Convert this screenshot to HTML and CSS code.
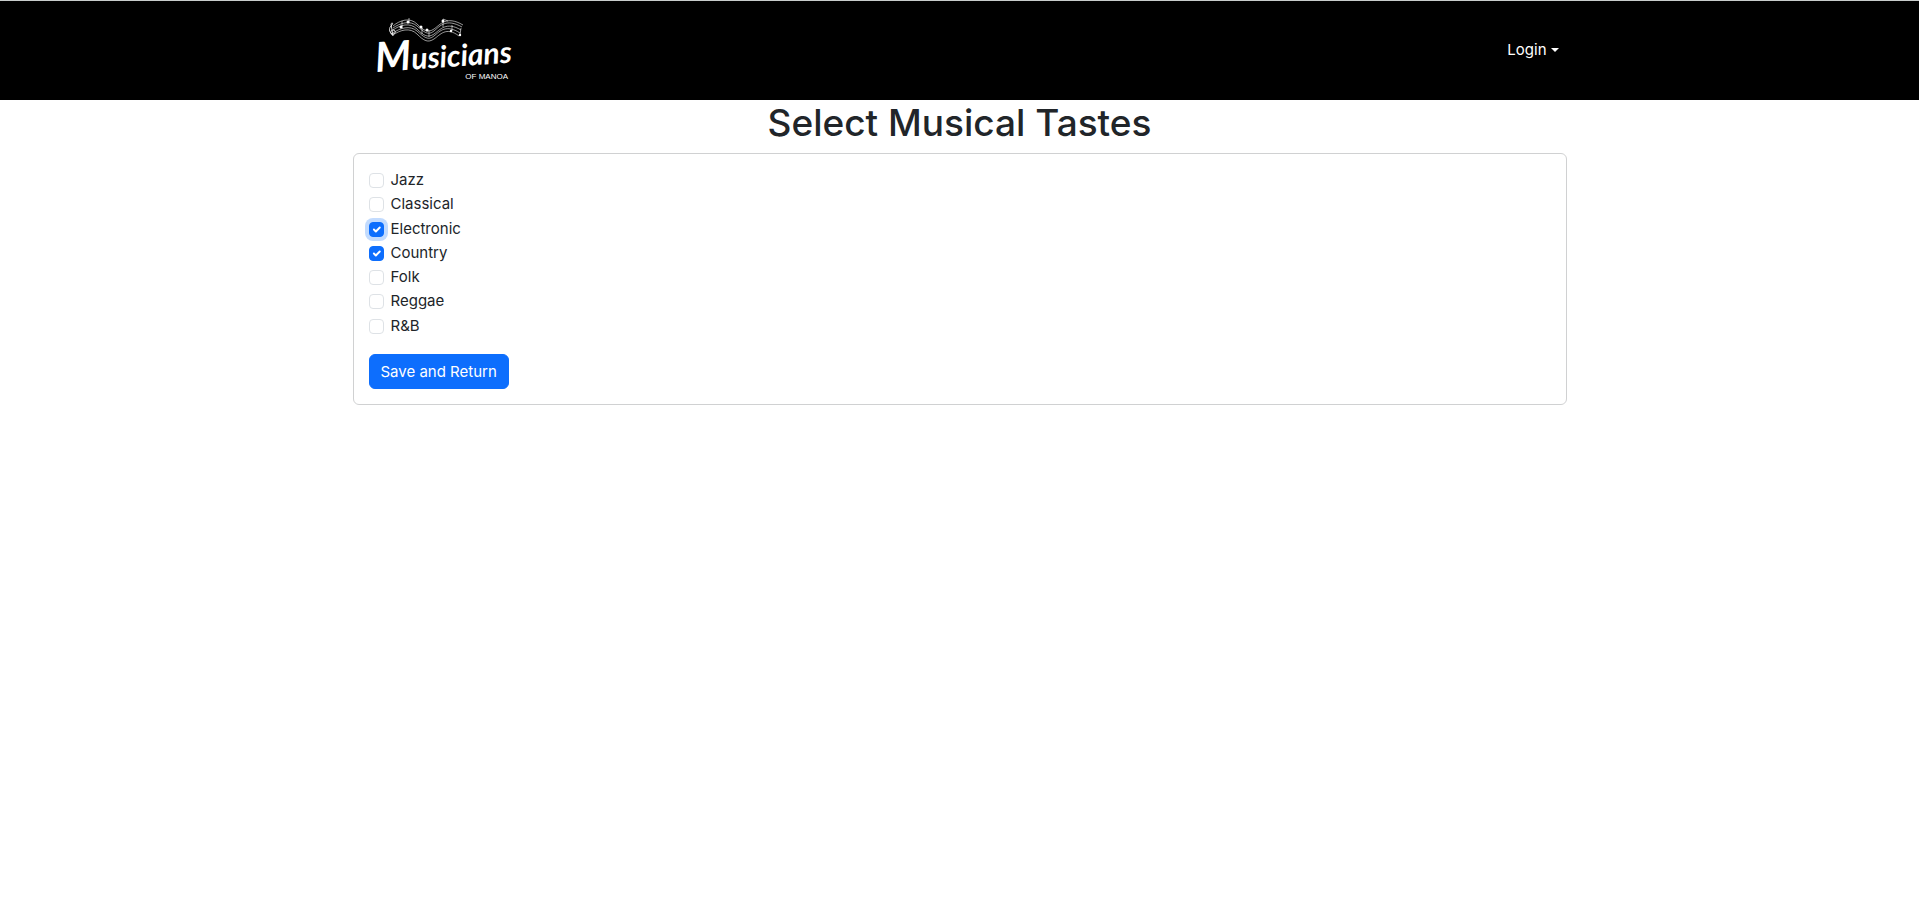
FILE: index.html
```html
<!DOCTYPE html>
<html lang="en">
<head>
<meta charset="utf-8">
<meta name="viewport" content="width=device-width, initial-scale=1">
<title>Musicians of Manoa</title>
<link rel="stylesheet" href="styles.css">
</head>
<body>
<header class="navbar">
  <div class="container navbar-inner">
    <a class="brand" href="#" aria-label="Musicians of Manoa">
      <svg class="logo" viewBox="0 0 150 75" width="150" height="75">
        <g class="staff">
          <path d="M25 14C32 8 42 5 49 12S60 21 66 17 78 3 95 13"/>
          <path d="M25 16C32 11 42 8 49 14S60 24 66 19 78 6 94 15"/>
          <path d="M25 18C32 13 42 10 49 17S60 26 66 22 78 9 93 18"/>
          <path d="M25 21C32 16 42 13 49 19S60 29 66 24 78 12 92 21"/>
          <path d="M25 23C32 18 42 15 49 22S60 31 66 27 78 14 91 24"/>
          <path class="clef" d="M25 23c-3 0-3-5 0-5s3 4 0 4-5-5-2-8 1-4 0-2l2 12"/>
          <path d="M34 16V9M41 11V6M54 16v6M61 18v7M75 15V7l5 2M84 19v-6M92 23l1-7"/>
        </g>
        <g class="notes">
          <circle cx="33" cy="15" r="1.5"/><circle cx="40" cy="10" r="1.5"/>
          <circle cx="53" cy="15" r="1.5"/><circle cx="59" cy="18" r="1.5"/>
          <circle cx="75" cy="9" r="1.5"/><circle cx="83" cy="19" r="1.2"/>
          <circle cx="92" cy="23" r="1.2"/>
        </g>
        <text class="logo-name" transform="translate(8 60) rotate(-4)"><tspan class="logo-cap">M</tspan>usicians</text>
        <text class="logo-sub" x="140" y="67" text-anchor="end">OF MANOA</text>
      </svg>
    </a>
    <button class="login" type="button" aria-haspopup="true">Login<span class="caret"></span></button>
  </div>
</header>
<main class="container">
  <h1 class="title">Select Musical Tastes</h1>
  <form class="card">
    <div class="tastes">
      <label class="taste"><input class="check" type="checkbox">Jazz</label>
      <label class="taste"><input class="check" type="checkbox">Classical</label>
      <label class="taste"><input class="check check-focus" type="checkbox" checked>Electronic</label>
      <label class="taste"><input class="check" type="checkbox" checked>Country</label>
      <label class="taste"><input class="check" type="checkbox">Folk</label>
      <label class="taste"><input class="check" type="checkbox">Reggae</label>
      <label class="taste"><input class="check" type="checkbox">R&amp;B</label>
    </div>
    <button class="save" type="button">Save and Return</button>
  </form>
</main>
</body>
</html>
```

FILE: styles.css
```css
* {
  box-sizing: border-box;
}

body {
  margin: 0;
  background: #fff;
  color: #212529;
  font: 400 15px/22px Inter, "Liberation Sans", sans-serif;
}

.container {
  max-width: 1236px;
  margin: 0 auto;
  padding: 0 11px;
}

.navbar {
  background: #000;
  border-top: 1px solid #c8cccb;
}

.navbar-inner {
  display: flex;
  align-items: center;
  justify-content: space-between;
  padding-top: 11px;
  padding-bottom: 13px;
}

.brand {
  display: block;
  margin-left: 15px;
}

.logo {
  display: block;
  fill: #fff;
}

.staff {
  fill: none;
  stroke: #fff;
  stroke-width: 0.7;
  stroke-opacity: 0.85;
}

.clef {
  stroke-width: 1;
}

.logo-name {
  font: italic 700 30px Lato, "Liberation Sans", sans-serif;
}

.logo-cap {
  font-size: 41px;
}

.logo-sub {
  font: 400 8px "Liberation Sans Narrow", "Liberation Sans", sans-serif;
}

.login {
  display: flex;
  align-items: center;
  gap: 4px;
  padding: 8px;
  border: 0;
  background: none;
  color: #fff;
  font: inherit;
}

.caret {
  border-top: 4px solid #fff;
  border-left: 4px solid transparent;
  border-right: 4px solid transparent;
}

.title {
  margin: 0 0 8px;
  font-size: 37px;
  font-weight: 500;
  line-height: 45px;
  text-align: center;
}

.card {
  padding: 15px;
  border: 1px solid #d0d1d2;
  border-radius: 6px;
}

.tastes {
  display: grid;
  grid-auto-rows: 1fr;
  justify-items: start;
  min-height: 170px;
  margin-bottom: 15px;
}

.taste {
  display: flex;
  align-items: flex-start;
  gap: 7px;
}

.check {
  appearance: none;
  flex: none;
  width: 15px;
  height: 15px;
  margin: 4px 0 0;
  border: 1px solid #dee2e6;
  border-radius: 4px;
  background: #fff;
}

.check:checked {
  border-color: #0d6efd;
  background: #0d6efd url("data:image/svg+xml,%3csvg xmlns='http://www.w3.org/2000/svg' viewBox='0 0 20 20'%3e%3cpath fill='none' stroke='%23fff' stroke-linecap='round' stroke-linejoin='round' stroke-width='3' d='m6 10 3 3 6-6'/%3e%3c/svg%3e") center / contain no-repeat;
}

.check-focus {
  box-shadow: 0 0 0 4px #c2dbfe;
}

.save {
  display: block;
  padding: 6px 11px;
  border: 1px solid #0d6efd;
  border-radius: 6px;
  background: #0d6efd;
  color: #fff;
  font: inherit;
  line-height: 21px;
}
```
